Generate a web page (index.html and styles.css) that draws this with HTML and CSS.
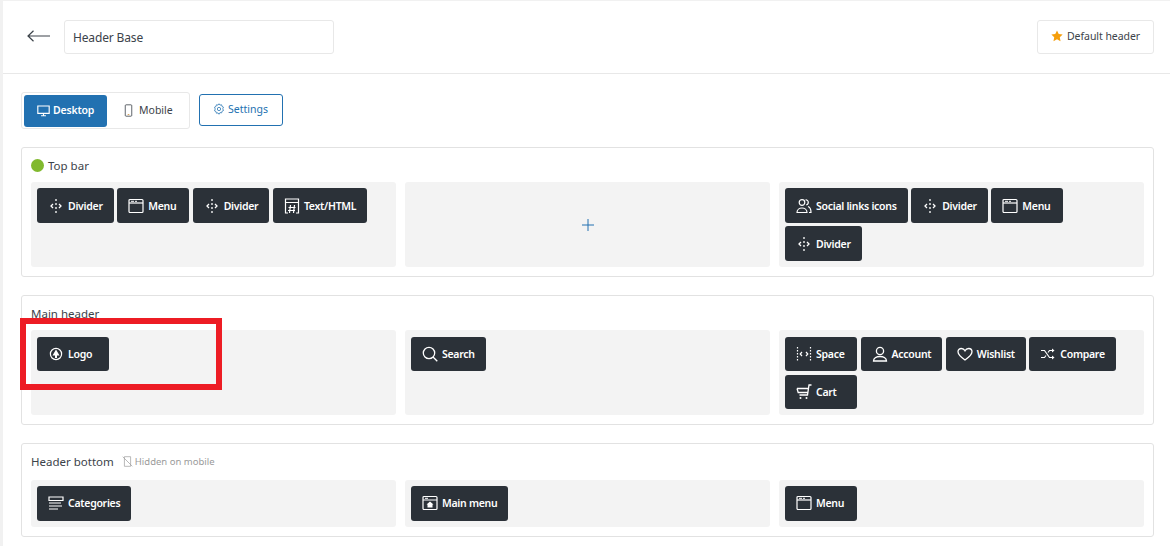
FILE: index.html
```html
<html>
<head>
  <link rel="stylesheet" href="styles.css">
</head>
<body>
  <svg class="icon-defs" width="0" height="0">
    <defs>
      <symbol id="i-divider" viewBox="0 0 16 16">
        <path d="M8 1v2M8 5v2M8 9v2M8 13v2" fill="none" stroke="currentColor" stroke-width="1.3"/>
        <path d="M5 6 3 8l2 2M11 6l2 2-2 2" fill="none" stroke="currentColor" stroke-width="1.3"/>
      </symbol>
      <symbol id="i-menu" viewBox="0 0 16 16">
        <rect x="1" y="1.5" width="14" height="13" rx="1" fill="none" stroke="currentColor" stroke-width="1.2"/>
        <path d="M1 5h14" fill="none" stroke="currentColor" stroke-width="1.2"/>
        <path d="M3 3.3h3M7 3.3h2" fill="none" stroke="currentColor" stroke-width="1"/>
      </symbol>
      <symbol id="i-html" viewBox="0 0 16 16">
        <path d="M4 15H1.5V1h13v14H12M1.500 4.5h13" fill="none" stroke="currentColor" stroke-width="1.2"/>
        <path d="M6.5 7 5.500 15M10.500 7l-1 8M4.500 9.5h7M4 12.5h7" fill="none" stroke="currentColor" stroke-width="1.2"/>
      </symbol>
      <symbol id="i-social" viewBox="0 0 16 16">
        <circle cx="6" cy="4.5" r="2.8" fill="none" stroke="currentColor" stroke-width="1.2"/>
        <path d="M1 14.5c0-6 10-6 10 0zM9.5 2c3-.6 4 3.800.8 5M12 8.5c1.800.6 3 2.500 3 6h-2" fill="none" stroke="currentColor" stroke-width="1.2"/>
      </symbol>
      <symbol id="i-space" viewBox="0 0 16 16">
        <path d="M1.5 1v14M14.5 1v14" fill="none" stroke="currentColor" stroke-width="1.2" stroke-dasharray="1.5 1.5"/>
        <path d="M6 6 4.200 8 6 10M10 6l1.800 2-1.800 2" fill="none" stroke="currentColor" stroke-width="1.2"/>
      </symbol>
      <symbol id="i-account" viewBox="0 0 16 16">
        <circle cx="8" cy="5" r="3.6" fill="none" stroke="currentColor" stroke-width="1.3"/>
        <path d="M1.5 15c0-6 13-6 13 0z" fill="none" stroke="currentColor" stroke-width="1.3"/>
      </symbol>
      <symbol id="i-heart" viewBox="0 0 16 16">
        <path d="M8 14C3 10.500 1 8.500 1 5.800 1 3.600 2.700 2.500 4.300 2.500 6 2.500 7.300 3.400 8 4.800 8.700 3.400 10 2.500 11.700 2.500 13.300 2.500 15 3.600 15 5.800 15 8.500 13 10.500 8 14z" fill="none" stroke="currentColor" stroke-width="1.3"/>
      </symbol>
      <symbol id="i-compare" viewBox="0 0 16 16">
        <path d="M1 4.5h3.5l5 7H13M1 11.5h3.500l1.500-2M8 6.500l1.500-2H13" fill="none" stroke="currentColor" stroke-width="1.2"/>
        <path d="M12 2.500l2.500 2-2.500 2zM12 9.500l2.500 2-2.500 2z" fill="currentColor"/>
      </symbol>
      <symbol id="i-cart" viewBox="0 0 16 16">
        <path d="M15.500 1H13l-1.500 10H3.500M1 4.500h11.500M1 4.500 2.200 8.500h9.800" fill="none" stroke="currentColor" stroke-width="1.3"/>
        <circle cx="4.5" cy="14" r="1" fill="currentColor"/>
        <circle cx="10.5" cy="14" r="1" fill="currentColor"/>
      </symbol>
      <symbol id="i-logo" viewBox="0 0 16 16">
        <circle cx="8" cy="8" r="5.6" fill="none" stroke="currentColor" stroke-width="1.2"/>
        <path d="M8 3.500 11.500 9.500H9V12H7V9.500H4.500z" fill="currentColor"/>
      </symbol>
      <symbol id="i-search" viewBox="0 0 16 16">
        <circle cx="7" cy="7" r="5.7" fill="none" stroke="currentColor" stroke-width="1.3"/>
        <path d="M11 11l4.300 4.300" fill="none" stroke="currentColor" stroke-width="1.3"/>
      </symbol>
      <symbol id="i-categories" viewBox="0 0 16 16">
        <path d="M1 2h14v3.500H1zM1 8h12M1 11h13M1 14h9" fill="none" stroke="currentColor" stroke-width="1.2"/>
      </symbol>
      <symbol id="i-mainmenu" viewBox="0 0 16 16">
        <rect x="1" y="1.5" width="14" height="13" rx="1" fill="none" stroke="currentColor" stroke-width="1.2"/>
        <path d="M1 5h14M3 3.300h3" fill="none" stroke="currentColor" stroke-width="1"/>
        <path d="M8 6.500 11.500 9.500H10.500V12.500H5.500V9.500H4.500z" fill="currentColor"/>
      </symbol>
    </defs>
  </svg>

  <div class="page">
    <div class="top-header">
      <div class="top-left">
        <svg class="back-arrow" viewBox="0 0 24 12" width="24" height="12"><path d="M23 6H1M6.500 .8 1 6l5.500 5.200" fill="none" stroke="currentColor" stroke-width="1.2"/></svg>
        <input class="name-input" type="text" value="Header Base">
      </div>
      <div class="default-btn">
        <svg class="star" viewBox="0 0 16 16" width="12" height="12"><path d="M8 .5l2.300 4.900 5.200.6-3.800 3.600 1 5.300L8 12.300l-4.700 2.600 1-5.300L.5 6l5.200-.6z" fill="#f59e0b"/></svg>
        Default header
      </div>
    </div>

    <div class="content">
      <div class="toolbar">
        <div class="tabs">
          <div class="tab active">
            <svg viewBox="0 0 16 16" width="13" height="13"><path d="M1 2.500h14v9H1zM5 14.500h6M8 11.500v3" fill="none" stroke="currentColor" stroke-width="1.4"/></svg>
            Desktop
          </div>
          <div class="tab tab-mobile">
            <svg viewBox="0 0 10 16" width="9" height="13"><rect x="1" y="1" width="8" height="14" rx="1" fill="none" stroke="currentColor" stroke-width="1"/><path d="M4 13h2" stroke="#d08a2a" stroke-width="1"/></svg>
            Mobile
          </div>
        </div>
        <div class="settings-btn">
          <svg viewBox="0 0 16 16" width="12" height="12"><path d="M8 1l1.300 1.800 2.200-.4.500 2.200 2 1L13 7.700 14 10l-2 1-.5 2.200-2.200-.4L8 15l-1.300-1.800-2.200.4L4 11.400l-2-1L3 8 2 5.600l2-1 .5-2.200 2.200.4z" fill="none" stroke="currentColor" stroke-width="1"/><circle cx="8" cy="8" r="2.2" fill="none" stroke="currentColor" stroke-width="1"/></svg>
          Settings
        </div>
      </div>

      <div class="section">
        <div class="section-title"><span class="dot"></span>Top bar</div>
        <div class="columns">
          <div class="col">
            <div class="chip"><svg><use href="#i-divider"/></svg>Divider</div>
            <div class="chip"><svg><use href="#i-menu"/></svg>Menu</div>
            <div class="chip"><svg><use href="#i-divider"/></svg>Divider</div>
            <div class="chip"><svg><use href="#i-html"/></svg>Text/HTML</div>
          </div>
          <div class="col col-empty">
            <svg class="plus" viewBox="0 0 12 12" width="12" height="12"><path d="M6 0v12M0 6h12" stroke="currentColor" stroke-width="1"/></svg>
          </div>
          <div class="col">
            <div class="chip"><svg><use href="#i-social"/></svg>Social links icons</div>
            <div class="chip"><svg><use href="#i-divider"/></svg>Divider</div>
            <div class="chip"><svg><use href="#i-menu"/></svg>Menu</div>
            <div class="chip"><svg><use href="#i-divider"/></svg>Divider</div>
          </div>
        </div>
      </div>

      <div class="section">
        <div class="section-title">Main header</div>
        <div class="columns">
          <div class="col">
            <div class="chip"><svg><use href="#i-logo"/></svg>Logo</div>
          </div>
          <div class="col">
            <div class="chip"><svg><use href="#i-search"/></svg>Search</div>
          </div>
          <div class="col">
            <div class="chip"><svg><use href="#i-space"/></svg>Space</div>
            <div class="chip"><svg><use href="#i-account"/></svg>Account</div>
            <div class="chip"><svg><use href="#i-heart"/></svg>Wishlist</div>
            <div class="chip"><svg><use href="#i-compare"/></svg>Compare</div>
            <div class="chip"><svg><use href="#i-cart"/></svg>Cart</div>
          </div>
        </div>
        <div class="highlight"></div>
      </div>

      <div class="section section-short">
        <div class="section-title">
          Header bottom
          <span class="hidden-note">
            <svg viewBox="0 0 16 16" width="11" height="11"><path d="M3.500 1h9v14h-9zM1 1l14 14" fill="none" stroke="currentColor" stroke-width="1"/></svg>
            Hidden on mobile
          </span>
        </div>
        <div class="columns">
          <div class="col">
            <div class="chip"><svg><use href="#i-categories"/></svg>Categories</div>
          </div>
          <div class="col">
            <div class="chip"><svg><use href="#i-mainmenu"/></svg>Main menu</div>
          </div>
          <div class="col">
            <div class="chip"><svg><use href="#i-menu"/></svg>Menu</div>
          </div>
        </div>
      </div>
    </div>
  </div>
</body>
</html>
```

FILE: styles.css
```css
* {
  box-sizing: border-box;
}

html, body {
  height: 100%;
}

body {
  margin: 0;
  padding: 1px 0 0 3px;
  background-color: #f1f1f1;
  font-family: 'Noto Sans', sans-serif;
  color: #3c434a;
  overflow: hidden;
}

.icon-defs {
  position: absolute;
}

.page {
  height: 100%;
  background-color: #fff;
}

.top-header {
  display: flex;
  justify-content: space-between;
  align-items: center;
  height: 73px;
  padding: 0 16px 0 24px;
  border-bottom: 1px solid #e8e8e8;
}

.top-left {
  display: flex;
  align-items: center;
  gap: 13px;
}

.back-arrow {
  color: #3c434a;
  margin-top: -2px;
}

.name-input {
  width: 270px;
  height: 34px;
  padding: 0 8px;
  border: 1px solid #e8e8e8;
  border-radius: 3px;
  font-family: inherit;
  font-size: 12px;
  letter-spacing: -0.15px;
  color: #3c434a;
  outline: none;
}

.default-btn {
  display: flex;
  align-items: center;
  gap: 4px;
  width: 117px;
  height: 34px;
  padding: 0 0 2px 13px;
  border: 1px solid #e8e8e8;
  border-radius: 3px;
  font-size: 10.5px;
  letter-spacing: -0.05px;
}

.content {
  padding: 18px 16px 0 18px;
}

.toolbar {
  display: flex;
  align-items: flex-start;
  gap: 9px;
  margin-bottom: 18px;
}

.tabs {
  display: flex;
  width: 169px;
  height: 37px;
  padding: 2px;
  border: 1px solid #e8e8e8;
  border-radius: 3px;
}

.tab {
  display: flex;
  align-items: center;
  gap: 3px;
  padding: 0 0 2px 13px;
  height: 32px;
  border-radius: 3px;
  font-size: 10.5px;
}

.tab.active {
  width: 83px;
  background-color: #2271b1;
  color: #fff;
  font-weight: 600;
  letter-spacing: -0.2px;
}

.tab-mobile {
  gap: 6px;
  padding-left: 17px;
}

.settings-btn {
  display: flex;
  align-items: center;
  gap: 3px;
  width: 84px;
  height: 32px;
  margin-top: 2px;
  padding: 0 0 2px 13px;
  border: 1px solid #2271b1;
  border-radius: 3px;
  color: #2271b1;
  font-size: 10.5px;
}

.section {
  position: relative;
  margin-bottom: 18.4px;
  padding: 0 9px 9px;
  border: 1px solid #e2e2e2;
  border-radius: 3px;
}

.section-title {
  display: flex;
  align-items: center;
  height: 33.8px;
  padding-top: 0.6px;
  font-size: 11.5px;
}

.section-short .section-title {
  height: 35.2px;
  padding-top: 0;
}

.dot {
  width: 13px;
  height: 13px;
  margin-right: 4px;
  border-radius: 50%;
  background-color: #81b92e;
}

.hidden-note {
  display: flex;
  align-items: center;
  gap: 2px;
  margin-left: 8px;
  font-size: 9.5px;
  color: #9a9a9a;
}

.columns {
  display: grid;
  grid-template-columns: repeat(3, 1fr);
  gap: 9px;
}

.col {
  display: flex;
  flex-wrap: wrap;
  align-content: flex-start;
  gap: 3.6px 3.5px;
  min-height: 85px;
  padding: 6.6px 6px 6px;
  border-radius: 3px;
  background-color: #f3f3f3;
}

.section-short .col {
  min-height: 47.6px;
}

.col-empty {
  justify-content: center;
  align-items: center;
  align-content: center;
  color: #2271b1;
}

.chip {
  display: flex;
  align-items: center;
  gap: 4px;
  min-width: 72px;
  height: 34.4px;
  padding: 0 11px;
  border-radius: 3px;
  background-color: #2b3138;
  color: #fff;
  font-size: 10.5px;
  font-weight: 600;
  letter-spacing: -0.28px;
}

.chip svg {
  width: 16px;
  height: 16px;
  flex-shrink: 0;
}

.highlight {
  position: absolute;
  left: -2px;
  top: 22px;
  width: 202px;
  height: 72px;
  border: 6px solid #ed1c24;
}
```
